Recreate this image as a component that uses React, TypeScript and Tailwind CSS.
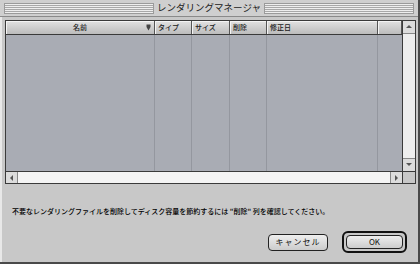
const font = { fontFamily: '"Noto Sans CJK JP", "Noto Sans", sans-serif' };

function Stripes() {
  return (
    <div className="flex-1 h-[11px] border border-[#9a9a9a] bg-[repeating-linear-gradient(to_bottom,#eeeeee_0px,#eeeeee_1px,#a8a8a8_1px,#a8a8a8_2px)]" />
  );
}

function HeaderCell({ label, className, children }: { label: string; className: string; children?: React.ReactNode }) {
  return (
    <div
      className={`h-full flex items-center text-[7px] font-medium text-[#222] border-r border-[#555] bg-gradient-to-b from-[#e2e2e2] to-[#bcbcbc] shadow-[inset_1px_1px_0_#f4f4f4] ${className}`}
    >
      {label}
      {children}
    </div>
  );
}

function Arrow({ dir }: { dir: 'up' | 'down' | 'left' | 'right' }) {
  const pts = {
    up: '1,5 4,2 7,5',
    down: '1,2 4,5 7,2',
    left: '5,1 2,4 5,7',
    right: '2,1 5,4 2,7',
  }[dir];
  return (
    <svg width="8" height="8" viewBox="0 0 8 8">
      <polygon points={pts} fill="#555" />
    </svg>
  );
}

export default function App() {
  return (
    <div className="w-[420px] h-[264px] bg-[#c8c8c8] border-r-2 border-b-2 border-[#4a4a4a] flex flex-col" style={font}>
      {/* Title bar */}
      <div className="h-[17px] flex items-center gap-[3px] px-[4px] border-b border-[#8a8a8a] bg-[#cfcfcf]">
        <Stripes />
        <div className="text-[9.5px] text-[#1a1a1a] leading-none">レンダリングマネージャ</div>
        <Stripes />
      </div>

      <div className="flex-1 flex flex-col border-l-2 border-[#e8e8e8] pl-[3px] pr-[2px] pt-[3px]">
        {/* List */}
        <div className="w-[411px] border border-[#3a3a3a] flex flex-col">
          <div className="flex h-[150px]">
            <div className="flex-1 flex flex-col">
              <div className="h-[14px] flex border-b border-[#3a3a3a]">
                <HeaderCell label="名前" className="w-[149px] justify-center relative">
                  {/* sort direction marker */}
                  <svg className="absolute right-[3px] top-[3px]" width="5" height="7" viewBox="0 0 5 7">
                    <rect x="0.5" y="0.5" width="4" height="2.5" fill="#444" />
                    <polygon points="0.5,3 4.5,3 2.5,6.5" fill="#444" />
                  </svg>
                </HeaderCell>
                <HeaderCell label="タイプ" className="w-[37px] pl-[3px]" />
                <HeaderCell label="サイズ" className="w-[38px] pl-[3px]" />
                <HeaderCell label="削除" className="w-[37px] pl-[3px]" />
                <HeaderCell label="修正日" className="w-[111px] pl-[3px]" />
                <HeaderCell label="" className="flex-1" />
              </div>
              <div className="flex-1 flex bg-[#a9acb4]">
                <div className="w-[149px] border-r border-[#94979f]" />
                <div className="w-[37px] border-r border-[#94979f]" />
                <div className="w-[38px] border-r border-[#94979f]" />
                <div className="w-[37px] border-r border-[#94979f]" />
                <div className="w-[111px] border-r border-[#94979f]" />
                <div className="flex-1" />
              </div>
            </div>
            {/* vertical scrollbar */}
            <div className="w-[13px] border-l border-[#3a3a3a] bg-[#eeeeee] flex flex-col justify-between">
              <div className="h-[13px] flex items-center justify-center bg-[#dcdcdc] border-b border-[#888]">
                <Arrow dir="up" />
              </div>
              <div className="h-[13px] flex items-center justify-center bg-[#dcdcdc] border-t border-[#888]">
                <Arrow dir="down" />
              </div>
            </div>
          </div>
          {/* horizontal scrollbar */}
          <div className="h-[12px] flex border-t border-[#3a3a3a]">
            <div className="flex-1 flex bg-[#f4f4f4]">
              <div className="w-[12px] flex items-center justify-center bg-[#dcdcdc] border-r border-[#888]">
                <Arrow dir="left" />
              </div>
              <div className="flex-1" />
              <div className="w-[12px] flex items-center justify-center bg-[#dcdcdc] border-l border-[#888]">
                <Arrow dir="right" />
              </div>
            </div>
            <div className="w-[13px] border-l border-[#3a3a3a] bg-[#c8c8c8]" />
          </div>
        </div>

        <div className="mt-[24px] pl-[7px] text-[7px] font-medium text-black leading-none whitespace-nowrap">
          不要なレンダリングファイルを削除してディスク容量を節約するには "削除" 列を確認してください。
        </div>

        <div className="mt-[16px] flex justify-end items-center gap-[14px] pr-[9px]">
          <button className="w-[60px] h-[17px] rounded-[4px] border border-[#222] bg-gradient-to-b from-[#eeeeee] to-[#cccccc] text-[8px] text-[#111] tracking-[1px] leading-none">
            キャンセル
          </button>
          <div className="w-[65px] h-[22px] p-[2px] rounded-[6px] border-[2px] border-[#111] bg-[#c8c8c8] flex">
            <button className="flex-1 rounded-[4px] border border-[#222] bg-gradient-to-b from-[#eeeeee] to-[#cccccc] text-[8px] text-[#111] leading-none">
              OK
            </button>
          </div>
        </div>
      </div>
    </div>
  );
}
